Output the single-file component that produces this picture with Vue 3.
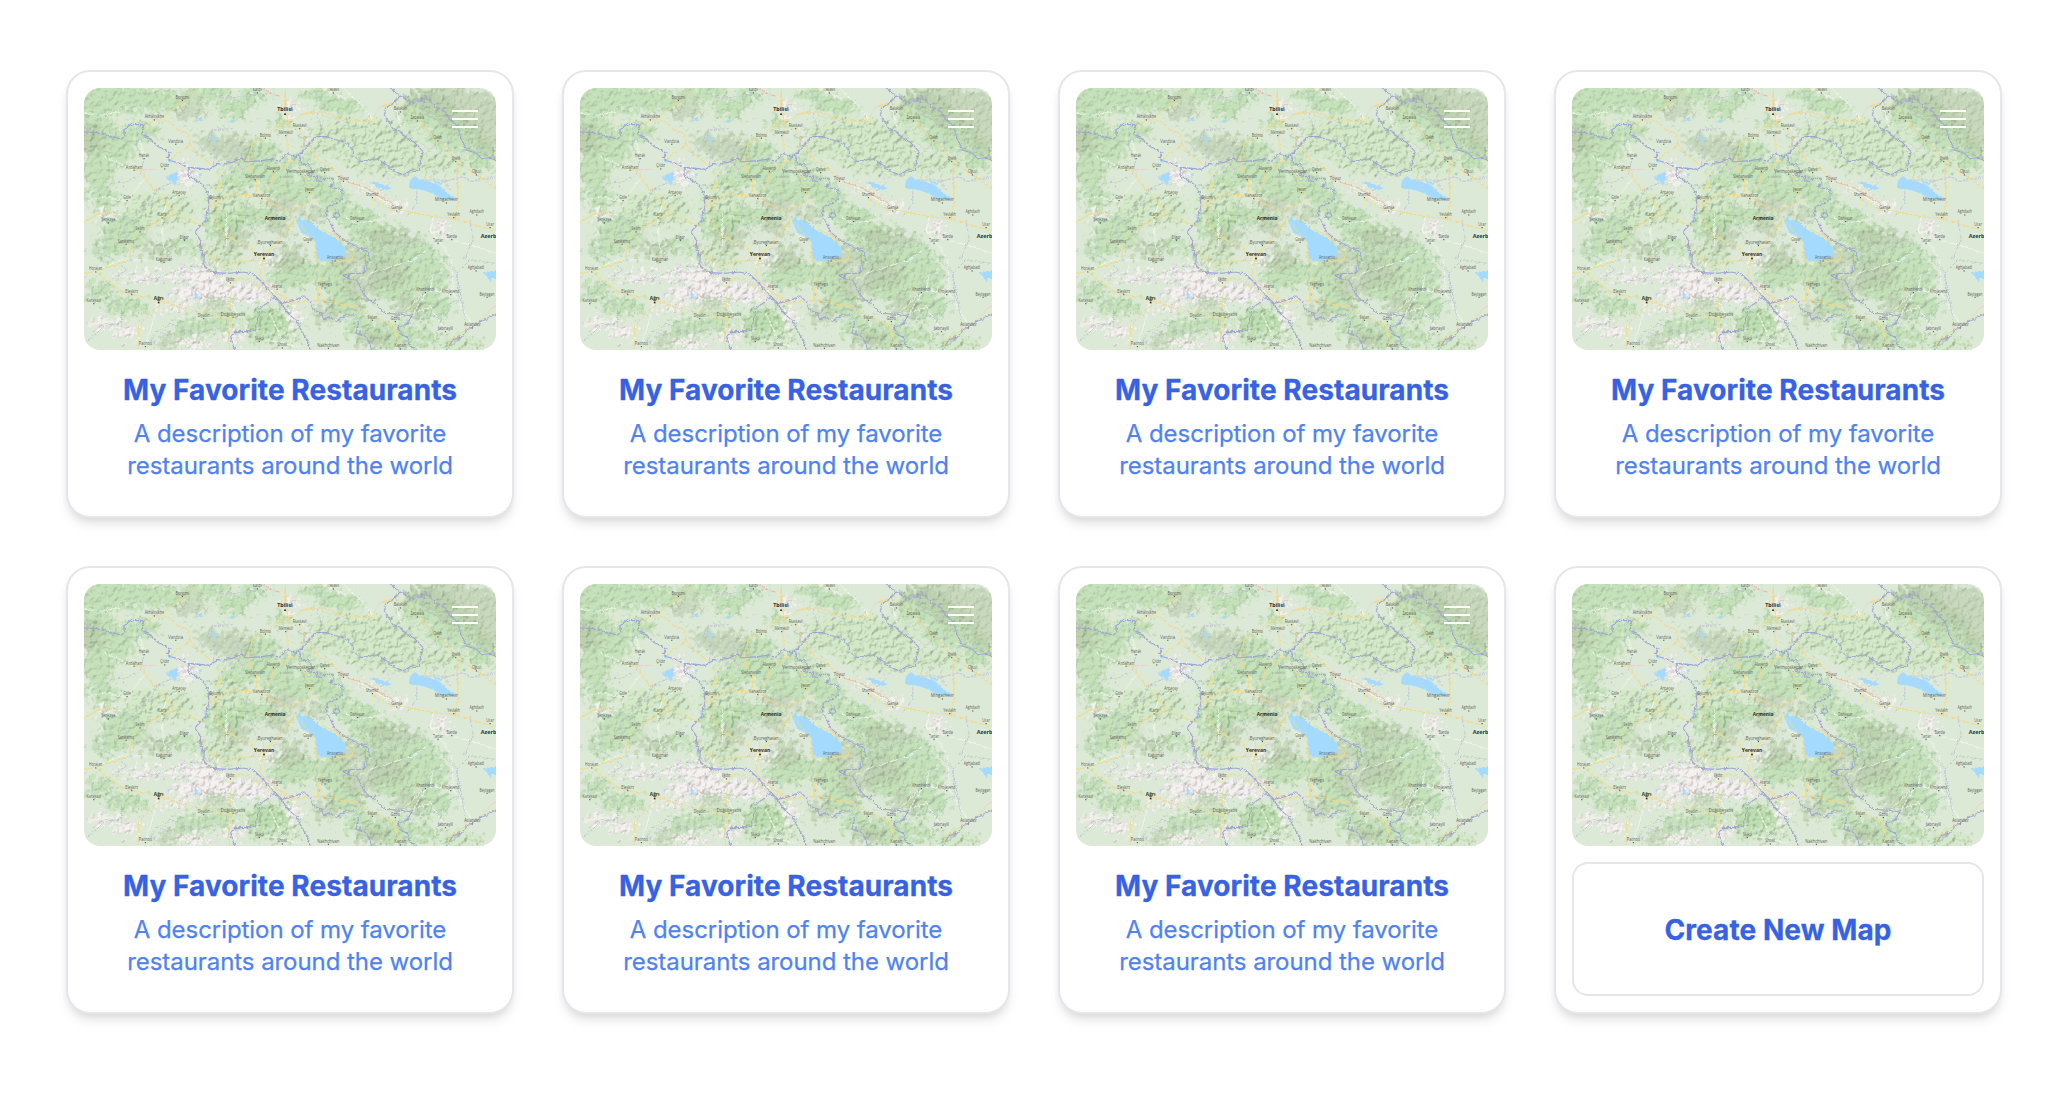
<script setup>
const maps = Array.from({ length: 7 }, (_, i) => ({
  id: i + 1,
  title: 'My Favorite Restaurants',
  description: 'A description of my favorite restaurants around the world',
}))

// Town labels: name, centre x, baseline y, label width
const towns = [
  ['Kaspi', 592, 94, 28], ['Telavi', 820, 94, 34], ['Borjomi', 367, 117, 40], ['Akhaltsikhe', 283, 175, 58],
  ['Vardzia', 347, 248, 44], ['Hanak', 252, 291, 31], ['Ardahan', 222, 326, 49], ['Çıldır', 314, 322, 27],
  ['Göle', 201, 417, 23], ['Arpaçay', 357, 402, 41], ['Kars', 306, 469, 27], ['Şenkaya', 145, 484, 42],
  ['Selim', 240, 511, 28], ['Digor', 373, 536, 27], ['Sarıkamış', 198, 548, 50], ['Kağızman', 312, 602, 49],
  ['Horasan', 107, 631, 40], ['Eleşkirt', 215, 699, 38], ['Karayazı', 101, 726, 43], ['Diyadin', 431, 771, 36],
  ['Patnos', 256, 855, 39], ['Doğubeyazıt', 519, 767, 73], ['Iğdır', 511, 664, 26], ['Ararat', 651, 683, 31],
  ['Rustavi', 719, 201, 42], ['Marneuli', 677, 222, 43], ['Bolnisi', 616, 230, 34], ['Alaverdi', 640, 330, 40],
  ['Stepanavan', 585, 355, 60], ['Verinvoskepar', 722, 338, 87], ['Qazax', 794, 333, 29], ['Tovuz', 850, 359, 33],
  ['Ijevan', 748, 393, 28], ['Vanadzor', 605, 411, 53], ['Gyumri', 468, 418, 42], ['Shamkir', 937, 408, 38],
  ['Ganja', 1010, 448, 33], ['Dashkasan', 892, 480, 43], ['Gavar', 744, 542, 28], ['Byureghavan', 631, 552, 75],
  ['Artsvanist', 825, 598, 48], ['Yeghegis', 795, 679, 43], ['Sisian', 937, 776, 29], ['Goris', 1006, 780, 27],
  ['Kapan', 1021, 862, 36], ['Nakhchivan', 805, 860, 66], ['Maku', 598, 840, 26], ['Showt', 667, 859, 30],
  ['Balakan', 1021, 151, 39], ['Zaqatala', 1072, 178, 41], ['Qakh', 1133, 238, 26], ['Sheki', 1187, 300, 25],
  ['Oğuz', 1249, 340, 26], ['Mingachevir', 1159, 424, 70], ['Yevlakh', 1181, 468, 38], ['Aghdash', 1250, 460, 43],
  ['Ucar', 1290, 498, 23], ['Barda', 1175, 534, 31], ['Tartar', 1134, 545, 30], ['Aghjabadi', 1248, 628, 49],
  ['Khankendi', 1096, 693, 54], ['Khojavend', 1172, 699, 52], ['Beylagan', 1281, 707, 45], ['Jabrayil', 1156, 810, 46],
  ['Aslanduz', 1237, 799, 49],
]
const cities = [
  ['Tbilisi', 675, 154, 46], ['Armenia', 645, 481, 62], ['Yerevan', 612, 587, 61], ['Ağrı', 296, 719, 29],
]

// Hill patches: cx, cy, rx, ry
const greenHills = [
  [130, 115, 130, 52], [230, 115, 80, 45], [310, 120, 65, 38], [440, 100, 75, 30], [100, 225, 70, 75], [240, 215, 60, 30], [180, 260, 50, 60],
  [110, 330, 60, 45], [130, 410, 55, 40], [190, 520, 75, 55], [140, 570, 55, 30], [580, 110, 50, 22], [520, 150, 55, 30],
  [840, 140, 75, 28], [770, 105, 60, 22], [1100, 150, 90, 55], [1180, 215, 85, 60], [1270, 285, 50, 50], [600, 270, 60, 35],
  [620, 330, 80, 35], [700, 385, 100, 40], [540, 355, 60, 30], [820, 420, 50, 50], [770, 360, 45, 40], [600, 465, 70, 35],
  [890, 470, 65, 35], [940, 515, 80, 35], [700, 640, 80, 50], [820, 650, 60, 60], [1060, 590, 70, 60], [1110, 640, 60, 60],
  [1000, 680, 70, 45], [1110, 740, 70, 45], [1000, 830, 80, 45], [860, 730, 60, 40], [910, 800, 60, 35], [620, 780, 70, 40],
  [350, 560, 70, 25], [480, 790, 55, 30], [120, 690, 50, 30], [200, 740, 70, 30], [390, 810, 60, 40], [660, 190, 40, 22],
  [720, 300, 45, 22], [490, 500, 60, 40], [1080, 830, 50, 30], [950, 590, 50, 50],
]
const oliveHills = [
  [1160, 115, 130, 45], [1230, 150, 110, 70], [1285, 210, 60, 75], [520, 270, 60, 50], [450, 250, 45, 35], [390, 155, 50, 30],
  [530, 535, 55, 35], [660, 500, 45, 30], [760, 470, 45, 25], [990, 535, 80, 30], [860, 590, 60, 40], [980, 640, 60, 50],
  [900, 680, 55, 45], [690, 590, 50, 40], [590, 690, 45, 25], [940, 840, 50, 30], [290, 570, 60, 25], [470, 730, 50, 25],
  [1050, 740, 50, 40], [800, 760, 50, 35], [670, 440, 60, 22], [330, 850, 55, 25], [90, 240, 45, 50],
]
const paleHills = [
  [410, 640, 65, 28], [470, 690, 85, 30], [580, 700, 60, 26], [270, 650, 110, 16], [378, 340, 24, 42], [140, 462, 45, 14],
  [200, 810, 40, 26], [400, 850, 60, 20], [520, 830, 38, 22], [350, 745, 60, 14], [120, 790, 35, 20], [380, 700, 55, 24],
  [930, 390, 55, 10], [690, 145, 34, 20], [740, 220, 8, 28], [1020, 440, 24, 20], [1140, 510, 34, 24], [620, 600, 40, 16], [700, 770, 18, 42],
]

const borders = [
  'M72 216 L110 218 L150 228 L185 237 L193 226 L192 210 L210 194 L245 193 L252 202 L245 222 L262 232 L275 240 L290 258 L306 265 L330 280 L322 295 L334 302 L356 310 L385 322 L384 345 L405 360 L430 374 L443 400 L447 440 L437 480 L412 508 L405 516 L420 540 L423 568 L432 590 L432 618 L462 638 L505 640 L550 636 L580 642 L605 665 L640 705 L668 735 L680 756 L712 785 L730 822 L745 850 L750 870',
  'M385 322 L420 325 L448 328 L475 312 L515 308 L545 294 L556 306 L605 302 L630 298 L660 303 L680 280 L705 292 L722 280 L735 268 L748 248 L770 230 L800 230 L830 240 L862 250 L880 272 L880 286 L903 305 L950 297 L975 310 L995 330 L1030 345 L1055 330 L1078 332 L1082 300 L1090 275 L1065 248 L1035 230 L1018 213 L998 206 L985 184 L974 168 L976 145 L998 130 L1020 108 L1060 130 L1075 118 L1095 125 L1098 107 L1125 140 L1150 150 L1170 180 L1190 195 L1205 240 L1220 270 L1250 280 L1265 297 L1290 292 L1308 302',
  'M720 290 L724 312 L750 315 L755 335 L735 345 L760 350 L775 348 L770 362 L785 366 L792 355 L815 355 L822 370 L808 380 L845 390 L847 415 L832 430 L803 438 L798 462 L812 490 L820 512 L845 535 L880 555 L925 575 L928 600 L912 625 L915 640 L880 640 L848 645 L865 655 L890 660 L905 690 L915 710 L950 735 L975 760 L1015 762 L1055 768 L1045 790 L1015 800 L1020 820 L1045 835 L1050 858 L1070 868',
  'M640 712 L620 730 L600 745 L592 780 L588 808 L565 815 L525 815 L512 830 L524 870',
  'M640 705 L665 730 L700 722 L732 708 L748 722 L760 750 L785 760 L790 778 L810 770 L828 785 L855 765 L888 765 L895 790 L888 820 L920 830 L935 868',
  'M1160 868 L1180 838 L1200 836 L1222 810 L1260 785 L1308 762',
  'M990 84 L1020 108',
  'M820 468 L822 458 L834 456 L840 466 L832 476 Z',
]
const districts = [
  'M250 222 L225 250 L252 300 L240 345 L200 365 L155 370 L130 400 M400 335 L330 370 L290 390 L270 430 L215 475 L180 480 M460 305 L480 270 L440 245 L455 210 L520 205 M215 475 L190 510 L200 530 L140 540 L105 540 L120 580 L165 600 L200 630 L150 660 L125 690 L185 745 L185 800 L140 790 L110 820 L75 850',
  'M200 670 L290 655 L380 620 L430 618 M360 610 L375 670 L410 690 L440 715 L495 710 L540 720 L595 712 M280 850 L330 790 L400 820 L480 805 M760 90 L790 130 L770 170 L800 230 M500 395 L560 440 L555 490 L600 520 M720 500 L800 480 M450 100 L500 115 L640 100',
  'M925 575 L990 575 L1070 540 L1110 560 L1160 610 L1195 640 M1090 700 L1120 640 L1180 650 M1060 790 L1090 760 L1160 780 L1165 730 L1195 720 L1190 640 L1230 600 L1308 610 M1190 640 L1205 720 L1220 810 M1100 280 L1130 250 L1180 245 M1070 370 L1070 430 L1040 470 M1130 370 L1210 350 L1230 365 L1308 350 M950 400 L990 370 L975 320 M1230 480 L1240 540 L1210 600 M1070 360 L1150 360 L1170 390 M1070 110 L1110 170 L1170 190',
]
const roads = [
  'M165 180 L175 195 M248 210 L283 178 L325 160 L385 112 L410 84 M283 178 L330 185 L345 205 L385 222 L390 250 L375 268 L345 285 L330 305 M390 250 L410 280 L450 310 M224 330 L285 328 M250 330 L255 355 L290 400 L330 440 L345 465 L306 472 L245 512 L212 548 L210 600 L165 615 L107 634 L72 640 M345 465 L395 485 L435 500',
  'M107 634 L150 672 L185 695 L220 705 L300 722 L370 745 L440 762 L515 775 L510 730 L515 690 L510 668 L540 655 L580 665 L630 700 L690 730 L790 720 L850 735 L890 738 L935 768 L1000 795 L1020 860 M235 870 L235 800 L265 765 L300 735 M515 775 L505 830 L510 870 M72 486 L120 460 L160 460',
  'M675 84 L678 160 L690 200 L680 230 L685 275 M720 170 L650 200 L615 232 L580 245 L565 290 L570 330 L590 355 L590 408 M720 165 L780 155 L860 180 L935 185 L960 140 L1010 125 L1070 180 L1130 240 L1190 300 L1250 345 L1308 385 M715 205 L740 245 L775 300 L840 345 M700 300 L640 335 L635 370 L605 408 L510 405 L468 425 L475 460 L468 490 L500 530 L570 560 L600 600',
  'M605 412 L680 455 L750 425 L750 395 L725 330 M610 595 L670 520 L710 470 M600 602 L540 605 L500 615 L435 580 L420 540 M610 600 L598 650 L650 700 L700 728 M610 555 L610 600 M710 480 L765 550 L770 605 L840 605 L880 598 L860 545 L790 510 M780 605 L775 720 M468 425 L440 450 M470 420 L480 340 M1020 450 L1120 470 L1185 475 L1260 500 L1308 510 M1190 310 L1195 430 L1182 475',
  'M1010 455 L940 420 M1160 850 L1200 820 L1250 790 L1308 735',
]
const minorRoads = [
  'M72 160 L130 165 L200 150 M130 290 L180 310 L220 330 M252 295 L240 240 M85 420 L140 410 L200 425 M200 425 L255 355 M306 472 L320 430 L380 390 L400 350 M306 472 L310 560 L330 590 M107 634 L180 600 L260 600 M296 722 L285 765 L256 858 M470 420 L440 390 M500 460 L500 560 M850 84 L910 140 L940 180 M1010 150 L1020 200 M850 355 L900 380 L1000 440 M1010 455 L960 480 L890 490 M890 490 L850 470 M745 545 L720 520',
  'M1120 470 L1110 510 L1150 560 L1175 600 L1180 700 L1210 750 L1240 800 M1096 700 L1060 760 L1110 740 L1156 810 M1175 540 L1250 560 L1308 580 M1172 700 L1110 690 L1120 640 M1006 785 L1050 740 L1090 700 M930 640 L1060 600 L1100 570 M500 700 L530 760 M630 760 L670 850 L720 862 M620 840 L670 850 M795 84 L860 120',
]
const lakes = [
  'M707 480 L716 471 L735 482 L752 488 L770 504 L790 516 L815 528 L840 545 L857 565 L856 588 L838 594 L808 602 L780 602 L768 595 L765 545 L745 527 L722 514 Z',
  'M1048 386 L1048 360 L1065 349 L1080 360 L1110 365 L1143 380 L1173 407 L1190 416 L1145 418 L1115 399 L1082 388 Z',
  'M928 366 L950 366 L995 384 L985 390 L950 382 Z', 'M315 350 L350 336 L355 350 L347 375 Z',
  'M1308 632 L1292 634 L1270 640 L1282 650 L1290 668 L1297 655 L1308 658 Z',
  'M455 230 L466 224 L466 240 L458 250 Z', 'M415 342 L428 338 L420 355 Z', 'M415 176 L428 170 L424 185 Z', 'M500 186 L522 180 L522 188 Z',
  'M403 692 L416 710 L405 722 Z', 'M1118 360 L1148 370 L1140 376 Z', 'M322 300 L340 302 L334 310 Z', 'M1058 605 L1075 590 L1065 608 Z',
  'M432 460 L440 465 L433 478 Z', 'M322 700 L328 698 L326 712 Z', 'M888 738 L900 744 L893 748 Z', 'M205 600 L218 597 L215 608 Z', 'M535 265 L544 266 L538 275 Z',
]
</script>

<template>
  <main class="page">
    <svg class="defs" aria-hidden="true">
      <defs>
        <filter id="relief" x="-5%" y="-5%" width="110%" height="110%" color-interpolation-filters="sRGB">
          <feGaussianBlur in="SourceGraphic" stdDeviation="7" result="soft" />
          <feTurbulence type="fractalNoise" baseFrequency="0.06" numOctaves="4" seed="8" result="noise" />
          <feDisplacementMap in="soft" in2="noise" scale="95" xChannelSelector="R" yChannelSelector="G" result="shape" />
          <feDiffuseLighting in="noise" surfaceScale="8" diffuseConstant="1.2" lighting-color="#ffffff" result="light">
            <feDistantLight azimuth="225" elevation="56" />
          </feDiffuseLighting>
          <feComposite in="shape" in2="light" operator="arithmetic" k1="0.34" k2="0.66" result="lit" />
          <feComposite in="lit" in2="shape" operator="in" />
        </filter>
        <filter id="rough" x="-2%" y="-2%" width="104%" height="104%">
          <feTurbulence type="fractalNoise" baseFrequency="0.13" numOctaves="2" seed="3" />
          <feDisplacementMap in="SourceGraphic" scale="11" xChannelSelector="R" yChannelSelector="G" />
        </filter>
        <symbol id="region-map" viewBox="72 84 1236 786" preserveAspectRatio="none">
          <rect x="72" y="84" width="1236" height="786" fill="#dce9d6" />
          <g filter="url(#relief)">
            <g fill="#d3e9c8">
              <ellipse cx="900" cy="240" rx="190" ry="65" />
              <ellipse cx="480" cy="590" rx="75" ry="45" />
              <ellipse cx="640" cy="800" rx="95" ry="65" />
              <ellipse cx="500" cy="440" rx="70" ry="80" />
              <ellipse cx="1050" cy="310" rx="190" ry="38" />
              <ellipse cx="300" cy="450" rx="110" ry="55" />
              <ellipse cx="1190" cy="850" rx="80" ry="30" />
            </g>
            <g fill="#b9deab" opacity="0.82">
              <ellipse v-for="(h, i) in greenHills" :key="i" :cx="h[0]" :cy="h[1]" :rx="h[2]" :ry="h[3]" />
            </g>
            <g fill="#b9ccab" opacity="0.74">
              <ellipse v-for="(h, i) in oliveHills" :key="i" :cx="h[0]" :cy="h[1]" :rx="h[2]" :ry="h[3]" />
            </g>
            <g fill="#f6f1f0">
              <ellipse v-for="(h, i) in paleHills" :key="i" :cx="h[0]" :cy="h[1]" :rx="h[2]" :ry="h[3]" />
            </g>
          </g>
          <g fill="none" stroke-linejoin="round" filter="url(#rough)">
            <path v-for="d in minorRoads" :key="d" :d="d" stroke="#f6f9f2" stroke-width="2.4" />
            <path v-for="d in districts" :key="d" :d="d" stroke="#b0b7cf" stroke-width="2" stroke-dasharray="9 3" />
            <path v-for="d in lakes" :key="d" :d="d" fill="#a5daff" />
          </g>
          <g fill="none" stroke-linejoin="round" stroke-linecap="round" filter="url(#rough)">
            <path v-for="d in roads" :key="d" :d="d" stroke="#f1d98c" stroke-width="3" />
            <path d="M610 84 L635 103 L658 108 M840 345 L870 368 L915 382 L950 405 L1000 430" stroke="#f2b79b" stroke-width="3" />
            <path v-for="d in borders" :key="d" :d="d" stroke="#a0a4d5" stroke-width="3.4" />
          </g>
          <g class="town">
            <template v-for="t in towns" :key="t[0]">
              <text :x="t[1]" :y="t[2]" :textLength="t[3]" lengthAdjust="spacingAndGlyphs">{{ t[0] }}</text>
              <rect :x="t[1] - 1.5" :y="t[2] + 3" width="3.6" height="3.6" />
            </template>
          </g>
          <g class="city">
            <template v-for="c in cities" :key="c[0]">
              <text :x="c[1]" :y="c[2]" :textLength="c[3]" lengthAdjust="spacingAndGlyphs">{{ c[0] }}</text>
              <rect v-if="c[0] !== 'Armenia'" :x="c[1] - 2.5" :y="c[2] + 6" width="5" height="5" />
            </template>
            <text x="1286" y="534" textLength="47" lengthAdjust="spacingAndGlyphs">Azerb</text>
          </g>
        </symbol>
      </defs>
    </svg>

    <section class="grid">
      <article v-for="map in maps" :key="map.id" class="card">
        <div class="preview">
          <svg class="map"><use href="#region-map" /></svg>
          <button class="menu" aria-label="Menu">
            <svg viewBox="0 0 26 18" width="26" height="18">
              <path d="M0 1H26M0 9H26M0 17H26" stroke="#fff" stroke-width="2" />
            </svg>
          </button>
        </div>
        <div class="info">
          <h2 class="title">{{ map.title }}</h2>
          <p class="description">{{ map.description }}</p>
        </div>
      </article>
      <article class="card">
        <div class="preview">
          <svg class="map"><use href="#region-map" /></svg>
        </div>
        <button class="create">Create New Map</button>
      </article>
    </section>
  </main>
</template>

<style>
body {
  margin: 0;
  background: #fff;
}
</style>

<style scoped>
.page {
  box-sizing: border-box;
  height: 1106px;
  padding: 70px 62px 0 66px;
  background: #fff;
  font-family: Inter, 'Liberation Sans', sans-serif;
}
.defs {
  position: absolute;
  width: 0;
  height: 0;
}
.grid {
  display: grid;
  grid-template-columns: repeat(4, 448px);
  gap: 48px;
}
.card {
  box-sizing: border-box;
  display: flex;
  flex-direction: column;
  gap: 16px;
  height: 448px;
  padding: 16px;
  border: 2px solid #e5e6eb;
  border-radius: 24px;
  background: #fff;
  box-shadow: 0 8px 12px -2px rgba(0, 0, 0, 0.1), 0 4px 8px -4px rgba(0, 0, 0, 0.1);
}
.preview {
  position: relative;
  height: 262px;
  border-radius: 16px;
  overflow: hidden;
}
.map {
  display: block;
  width: 412px;
  height: 262px;
}
.town text,
.city text {
  font-family: 'Open Sans', 'Noto Sans', sans-serif;
  text-anchor: middle;
}
.town {
  font-size: 14px;
  font-weight: 400;
  fill: #5c615c;
}
.city {
  font-size: 18px;
  font-weight: 700;
  fill: #2c302c;
}
.menu {
  position: absolute;
  top: 22px;
  right: 18px;
  display: flex;
  padding: 0;
  border: 0;
  background: none;
}
.info {
  display: flex;
  flex-direction: column;
  align-items: center;
  padding: 4px 32px 0;
  text-align: center;
}
.title {
  margin: 0;
  color: #3662e3;
  font-size: 28px;
  line-height: 40px;
  font-weight: 700;
  letter-spacing: 0.07px;
  white-space: nowrap;
  -webkit-text-stroke: 0.3px #3662e3;
}
.description {
  width: 348px;
  margin: 8px 0 0;
  color: #5083ef;
  font-size: 24px;
  line-height: 32px;
  letter-spacing: -0.06px;
  -webkit-text-stroke: 0.25px #5083ef;
}
.create {
  height: 134px;
  padding: 2px 0 0;
  border: 2px solid #e5e6eb;
  border-radius: 16px;
  background: #fff;
  color: #3662e3;
  font-family: inherit;
  font-size: 28px;
  line-height: 40px;
  font-weight: 700;
  letter-spacing: 0.07px;
  -webkit-text-stroke: 0.3px #3662e3;
}
</style>
